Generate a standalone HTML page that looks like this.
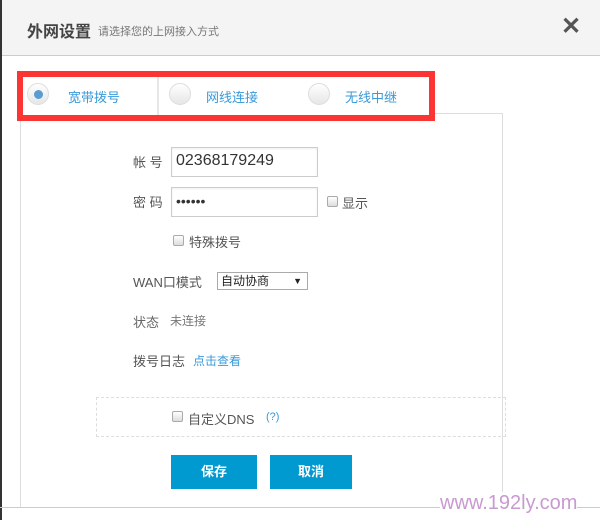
<!DOCTYPE html>
<html><head><meta charset="utf-8"><style>
*{margin:0;padding:0;box-sizing:border-box}
body{width:600px;height:520px;background:#fff;position:relative;overflow:hidden;font-family:"Liberation Sans","Noto Sans CJK SC",sans-serif;color:#555}
.a{position:absolute}
.hdr{left:0;top:0;width:600px;height:56px;background:#f4f4f4;border-bottom:1px solid #ccc}
.lbar{left:0;top:0;width:2px;height:520px;background:#333}
.radio{width:22px;height:22px;border-radius:50%;border:1px solid #ddd;background:linear-gradient(#fff,#e6e6e6)}
.tab{font-size:13px;color:#3a9ad9}
.lbl{font-size:13px;color:#555}
.inp{border:1px solid #ccc;background:#fff;box-shadow:inset 0 1px 2px #eee}
.cb{width:11px;height:11px;border:1px solid #aaa;border-radius:2px;background:linear-gradient(#fff,#ddd)}
.btn{background:#0099d0;color:#fff;font-weight:bold;font-size:13px;text-align:center;line-height:34px;height:34px}
</style></head><body>
<div class="a hdr"></div>
<div class="a lbar"></div>
<div class="a" style="left:27px;top:18px;font-size:16px;font-weight:bold;color:#444">外网设置</div>
<div class="a" style="left:98px;top:23px;font-size:11px;color:#777">请选择您的上网接入方式</div>
<div class="a" style="left:561px;top:12px;font-size:24px;color:#555;font-weight:bold">✕</div>
<div class="a" style="left:20px;top:113px;width:483px;height:395px;border:1px solid #ddd;border-bottom:none"></div>
<div class="a" style="left:0;top:507px;width:600px;height:1px;background:#ccc"></div>
<div class="a" style="left:17px;top:71px;width:418px;height:50px;border:6px solid #fb3434;background:#fff"></div>
<div class="a" style="left:157px;top:77px;width:2px;height:38px;background:#e6e6e6"></div>
<div class="a radio" style="left:27px;top:83px"></div>
<div class="a" style="left:34px;top:90px;width:9px;height:9px;border-radius:50%;background:#5a9bd0"></div>
<div class="a tab" style="left:68px;top:87px">宽带拨号</div>
<div class="a radio" style="left:169px;top:83px"></div>
<div class="a tab" style="left:206px;top:87px">网线连接</div>
<div class="a radio" style="left:308px;top:83px"></div>
<div class="a tab" style="left:345px;top:87px">无线中继</div>

<div class="a lbl" style="left:133px;top:152px">帐 号</div>
<div class="a inp" style="left:171px;top:147px;width:147px;height:30px;font-size:16px;color:#333;padding:4px 4px">02368179249</div>
<div class="a lbl" style="left:133px;top:192px">密 码</div>
<div class="a inp" style="left:171px;top:187px;width:147px;height:30px;font-size:14px;color:#333;padding:5px 4px;letter-spacing:0">••••••</div>
<div class="a cb" style="left:327px;top:196px"></div>
<div class="a lbl" style="left:342px;top:193px">显示</div>
<div class="a cb" style="left:173px;top:235px"></div>
<div class="a lbl" style="left:189px;top:232px">特殊拨号</div>
<div class="a lbl" style="left:133px;top:272px;font-size:13px">WAN口模式</div>
<div class="a" style="left:217px;top:272px;width:91px;height:18px;border:1px solid #aaa;font-size:12px;color:#222;padding:0 3px;line-height:16px">自动协商<span style="position:absolute;right:5px;top:0;font-size:9px">▼</span></div>
<div class="a lbl" style="left:133px;top:312px;color:#666">状态</div>
<div class="a lbl" style="left:170px;top:312px;font-size:12px;color:#777">未连接</div>
<div class="a lbl" style="left:133px;top:351px">拨号日志</div>
<div class="a" style="left:193px;top:352px;font-size:12px;color:#3a9ad9">点击查看</div>
<div class="a" style="left:96px;top:397px;width:410px;height:40px;border:1px dashed #ddd"></div>
<div class="a cb" style="left:172px;top:411px"></div>
<div class="a lbl" style="left:188px;top:409px">自定义DNS</div>
<div class="a" style="left:266px;top:411px;font-size:11px;color:#3a9ad9">(?)</div>
<div class="a btn" style="left:171px;top:455px;width:86px">保存</div>
<div class="a btn" style="left:270px;top:455px;width:82px">取消</div>
<div class="a" style="left:440px;top:492px;font-size:20px;color:#c99ad0;background:#fff">www.192ly.com</div>
</body></html>
